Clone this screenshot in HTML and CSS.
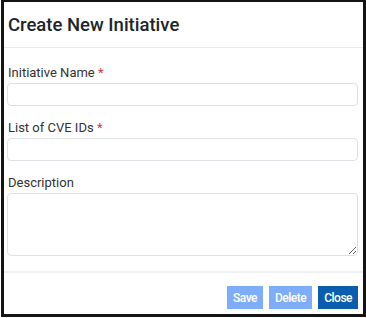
FILE: index.html
```html
<!DOCTYPE html>
<html lang="en">
<head>
    <meta charset="UTF-8">
    <meta name="viewport" content="width=device-width, initial-scale=1.0">
    <title>Create New Initiative</title>
    <link rel="stylesheet" href="styles.css">
</head>
<body>
    <div class="modal">
        <div class="modal-header">
            <h2>Create New Initiative</h2>
        </div>
        <div class="modal-body">
            <div class="form-group">
                <label for="initiative-name">Initiative Name <span class="req">*</span></label>
                <input type="text" id="initiative-name" />
            </div>
            <div class="form-group">
                <label for="cve-ids">List of CVE IDs <span class="req">*</span></label>
                <input type="text" id="cve-ids" />
            </div>
            <div class="form-group">
                <label for="description">Description</label>
                <textarea id="description"></textarea>
            </div>
        </div>
        <div class="modal-footer">
            <button class="btn btn-light" disabled>Save</button>
            <button class="btn btn-light" disabled>Delete</button>
            <button class="btn btn-dark">Close</button>
        </div>
    </div>
</body>
</html>
```

FILE: styles.css
```css
body {
    font-family: Roboto, 'Liberation Sans', sans-serif;
    background-color: #fff;
    color: #212529;
    margin: 0;
    padding: 0;
}
.modal {
    box-sizing: border-box;
    width: 365px;
    height: 317px;
    margin-left: 1px;
    border: 3px solid #141414;
    border-top-width: 2px;
    display: flex;
    flex-direction: column;
}
.modal-header {
    height: 46px;
    padding: 0 5px 0 4px;
    border-bottom: 1px solid #e9ecef;
    display: flex;
    align-items: center;
    box-sizing: border-box;
}
.modal-header h2 {
    margin: 0;
    font-size: 18.5px;
    font-weight: 500;
    color: #212529;
}
.modal-body {
    padding: 17px 5px 0 3px;
    height: 225px;
    box-sizing: border-box;
    border-bottom: 2px solid #eef0f2;
}
.form-group {
    margin-bottom: 14px;
}
.form-group label {
    display: block;
    font-size: 13px;
    line-height: 15px;
    color: #333;
    margin: 0 0 3px 1px;
}
.req {
    color: #dc3545;
}
.form-group input,
.form-group textarea {
    display: block;
    box-sizing: border-box;
    width: 100%;
    height: 23px;
    border: 1px solid #dee2e6;
    border-radius: 4px;
    padding: 2px 6px;
    font-family: inherit;
    font-size: 13px;
    background: #fff;
}
.form-group textarea {
    height: 63px;
    resize: vertical;
}
.modal-footer {
    flex: 1;
    display: flex;
    justify-content: flex-end;
    align-items: flex-end;
    gap: 6px;
    padding: 0 5px 5px 0;
}
.btn {
    height: 23px;
    border: none;
    border-radius: 0;
    padding: 0 6px;
    font-family: inherit;
    font-size: 12px;
    font-weight: 500;
    letter-spacing: -0.5px;
    color: #fff;
    cursor: pointer;
}
.btn-light {
    background-color: #7eaefb;
}
.btn-dark {
    background-color: #0b5ead;
}
```
